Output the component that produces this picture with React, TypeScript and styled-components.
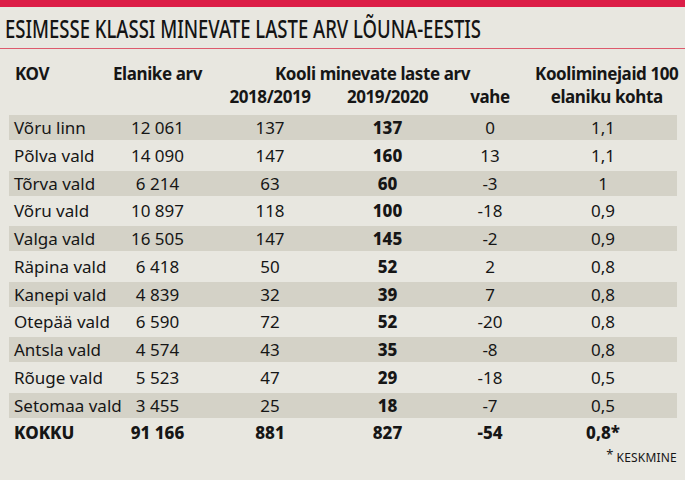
import React from "react";
import styled, { createGlobalStyle } from "styled-components";

const GlobalStyle = createGlobalStyle`
  html, body { margin: 0; padding: 0; background: #e8e7e0; }
  body { font-family: "Noto Sans", "Open Sans", sans-serif; color: #161616; }
`;

const Page = styled.div`
  width: 685px;
  height: 480px;
  background: #e8e7e0;
  overflow: hidden;
  display: flex;
  flex-direction: column;
`;

const TopBar = styled.div`
  height: 7px;
  background: #dc1e47;
`;

const TitleBox = styled.div`
  height: 41px;
  display: flex;
  align-items: center;
  padding-left: 5px;
`;

const Title = styled.h1`
  margin: 0;
  font-size: 25px;
  font-weight: 500;
  line-height: 28px;
  white-space: nowrap;
  display: inline-block;
  transform: scaleX(0.74);
  transform-origin: left center;
  color: #141414;
`;

const Rule = styled.div`
  height: 1px;
  background: #dd5a6c;
`;

const Table = styled.div`
  padding: 0 8px 0 9px;
  display: flex;
  flex-direction: column;
`;

const cols = "96px 105px 120px 115px 90px 1fr";

const Head = styled.div`
  display: grid;
  grid-template-columns: ${cols};
  grid-template-rows: 23px 23px;
  margin-top: 13px;
  margin-bottom: 7px;
  padding-right: 6px;
  font-weight: 700;
  font-size: 17px;
  letter-spacing: -0.4px;
  line-height: 23px;
`;

const HeadCell = styled.div<{ $col: string; $row: string; $left?: boolean }>`
  grid-column: ${(p) => p.$col};
  grid-row: ${(p) => p.$row};
  display: flex;
  justify-content: ${(p) => (p.$left ? "flex-start" : "center")};
  padding-left: ${(p) => (p.$left ? "6px" : "0")};
  white-space: nowrap;
`;

const Rows = styled.div`
  display: flex;
  flex-direction: column;
  gap: 2.75px;
`;

const Row = styled.div<{ $striped: boolean; $total?: boolean }>`
  display: grid;
  grid-template-columns: ${cols};
  height: 25px;
  align-items: center;
  padding-right: 6px;
  background: ${(p) => (p.$striped ? "#d4d2c7" : "transparent")};
  font-size: 17px;
  font-weight: ${(p) => (p.$total ? 800 : 400)};
`;

const Cell = styled.div<{ $left?: boolean; $bold?: boolean }>`
  text-align: ${(p) => (p.$left ? "left" : "center")};
  padding-left: ${(p) => (p.$left ? "5px" : "0")};
  font-weight: ${(p) => (p.$bold ? 800 : "inherit")};
  white-space: nowrap;
`;

const Footnote = styled.div`
  text-align: right;
  padding-right: 0;
  margin-top: 3px;
  font-size: 12px;
  letter-spacing: 0.2px;
`;

const Star = styled.span`
  font-size: 13px;
  position: relative;
  top: -3px;
  margin-right: 3px;
`;

const data: [string, string, string, string, string, string][] = [
  ["Võru linn", "12 061", "137", "137", "0", "1,1"],
  ["Põlva vald", "14 090", "147", "160", "13", "1,1"],
  ["Tõrva vald", "6 214", "63", "60", "-3", "1"],
  ["Võru vald", "10 897", "118", "100", "-18", "0,9"],
  ["Valga vald", "16 505", "147", "145", "-2", "0,9"],
  ["Räpina vald", "6 418", "50", "52", "2", "0,8"],
  ["Kanepi vald", "4 839", "32", "39", "7", "0,8"],
  ["Otepää vald", "6 590", "72", "52", "-20", "0,8"],
  ["Antsla vald", "4 574", "43", "35", "-8", "0,8"],
  ["Rõuge vald", "5 523", "47", "29", "-18", "0,5"],
  ["Setomaa vald", "3 455", "25", "18", "-7", "0,5"],
];

export default function App() {
  return (
    <>
      <GlobalStyle />
      <Page>
        <TopBar />
        <TitleBox>
          <Title>ESIMESSE KLASSI MINEVATE LASTE ARV LÕUNA-EESTIS</Title>
        </TitleBox>
        <Rule />
        <Table>
          <Head>
            <HeadCell $col="1" $row="1" $left>KOV</HeadCell>
            <HeadCell $col="2" $row="1">Elanike arv</HeadCell>
            <HeadCell $col="3 / 6" $row="1">Kooli minevate laste arv</HeadCell>
            <HeadCell $col="3" $row="2">2018/2019</HeadCell>
            <HeadCell $col="4" $row="2">2019/2020</HeadCell>
            <HeadCell $col="5" $row="2">vahe</HeadCell>
            <HeadCell $col="6" $row="1">Kooliminejaid 100</HeadCell>
            <HeadCell $col="6" $row="2">elaniku kohta</HeadCell>
          </Head>
          <Rows>
            {data.map((r, i) => (
              <Row key={r[0]} $striped={i % 2 === 0}>
                <Cell $left>{r[0]}</Cell>
                <Cell>{r[1]}</Cell>
                <Cell>{r[2]}</Cell>
                <Cell $bold>{r[3]}</Cell>
                <Cell>{r[4]}</Cell>
                <Cell>{r[5]}</Cell>
              </Row>
            ))}
            <Row $striped={false} $total>
              <Cell $left>KOKKU</Cell>
              <Cell>91 166</Cell>
              <Cell>881</Cell>
              <Cell>827</Cell>
              <Cell>-54</Cell>
              <Cell>0,8*</Cell>
            </Row>
          </Rows>
          <Footnote>
            <Star>*</Star>KESKMINE
          </Footnote>
        </Table>
      </Page>
    </>
  );
}
